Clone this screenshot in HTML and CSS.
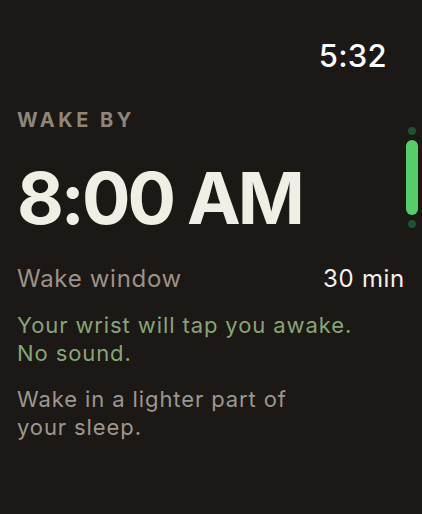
FILE: index.html
```html
<!DOCTYPE html>
<html>
<head>
<meta charset="utf-8">
<link rel="stylesheet" href="styles.css">
</head>
<body>
<div class="screen">
  <header class="status"><span class="clock">5:32</span></header>
  <main class="content">
    <div class="label">WAKE BY</div>
    <div class="time">8:00 AM</div>
    <div class="row"><span class="row-name">Wake window</span><span class="row-value">30 min</span></div>
    <p class="note green">Your wrist will tap you awake.<br>No sound.</p>
    <p class="note gray">Wake in a lighter part of<br>your sleep.</p>
  </main>
  <div class="scroll">
    <span class="dot"></span>
    <span class="thumb"></span>
    <span class="dot"></span>
  </div>
</div>
</body>
</html>
```
FILE: styles.css
```css
html, body {
  margin: 0;
  padding: 0;
  background: #1c1816;
}
body {
  font-family: Inter, "Noto Sans", sans-serif;
  width: 422px;
  height: 514px;
  overflow: hidden;
}
.screen {
  position: relative;
  width: 422px;
  height: 514px;
}
.status {
  display: flex;
  justify-content: flex-end;
  padding: 38px 35px 0 0;
}
.clock {
  color: #ffffff;
  font-size: 31px;
  line-height: 36px;
  font-weight: 500;
  letter-spacing: 0.3px;
}
.content {
  padding: 0 17px;
}
.label {
  margin-top: 35px;
  color: #8f867b;
  font-size: 20px;
  font-weight: 700;
  letter-spacing: 3.5px;
  line-height: 22px;
}
.time {
  margin-top: 27px;
  color: #f1eee5;
  font-size: 72px;
  font-weight: 700;
  letter-spacing: -3px;
  line-height: 80px;
}
.row {
  display: flex;
  justify-content: space-between;
  align-items: baseline;
  margin-top: 27px;
  font-size: 24px;
  line-height: 28px;
  letter-spacing: 0.7px;
}
.row-name { color: #9b9288; }
.row-value { color: #f4f1ea; }
.note {
  margin: 0;
  font-size: 22px;
  line-height: 28px;
  letter-spacing: 0.9px;
}
.green {
  margin-top: 18px;
  color: #87a576;
}
.gray {
  margin-top: 18px;
  color: #9c978f;
}
.scroll {
  position: absolute;
  top: 127px;
  right: 4px;
  width: 12px;
  display: flex;
  flex-direction: column;
  align-items: center;
  gap: 5px;
}
.dot {
  width: 8px;
  height: 8px;
  border-radius: 50%;
  background: #1d5232;
}
.thumb {
  width: 12px;
  height: 75px;
  border-radius: 6px;
  background: #56cc6a;
}
```
